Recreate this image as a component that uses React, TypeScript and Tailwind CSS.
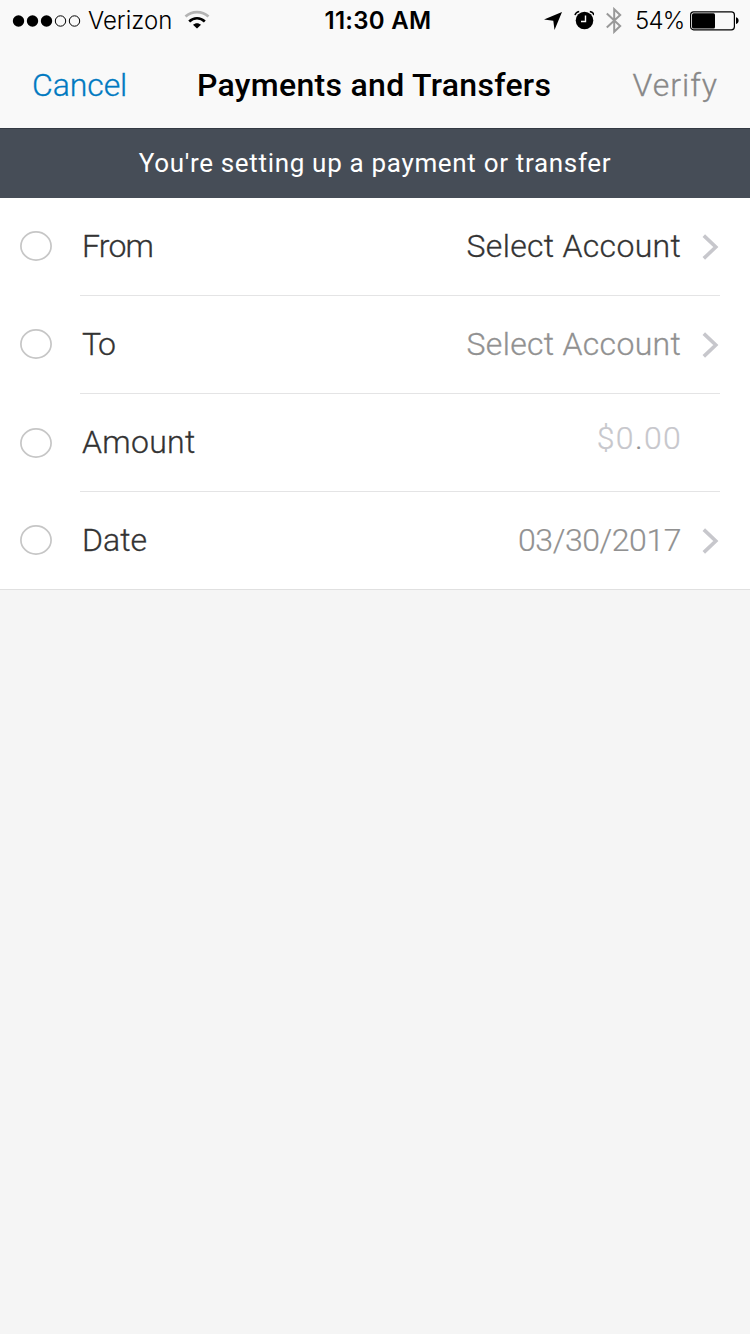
import type { ReactNode } from "react";

function StatusBar() {
  return (
    <div className="flex h-10 items-center pt-[2px] font-['Inter','Liberation_Sans',sans-serif] text-[24px] leading-[38px] text-black">
      <div className="flex w-[250px] shrink-0 items-center pl-[12px]">
        <svg className="-mt-px shrink-0" width="70" height="14" viewBox="0 0 70 14">
          <circle cx="6.5" cy="7" r="5.7" />
          <circle cx="20.5" cy="7" r="5.7" />
          <circle cx="34.5" cy="7" r="5.7" />
          <circle cx="48.5" cy="7" r="5.2" fill="none" stroke="#000" />
          <circle cx="62.5" cy="7" r="5.2" fill="none" stroke="#000" />
        </svg>
        <span className="ml-[6px] w-[96px] shrink-0">Verizon</span>
        <svg className="-mt-[2px] shrink-0" width="26" height="20" viewBox="0 0 26 20" fill="none" strokeWidth="2.7">
          <path d="M1.5 6.600C8 .5 18 .5 24.500 6.600" stroke="#b4b4b4" />
          <path d="M5.200 11.400c4.500-4.200 11.100-4.200 15.600 0" stroke="#000" />
          <path d="M13 18.500l-4-3.700c2.200-2.200 5.800-2.200 8 0z" fill="#000" />
        </svg>
      </div>
      <div className="w-[256px] shrink-0 text-center font-semibold tracking-[0.3px]">11:30 AM</div>
      <div className="flex flex-1 items-center pl-[38px]">
        <svg className="-mt-px shrink-0" width="18" height="18" viewBox="0 0 18 18">
          <path d="M18 0L10.500 18L9.300 8.700L0 7.500Z" />
        </svg>
        <svg className="-mt-[2px] ml-[12px] shrink-0" width="20" height="20" viewBox="0 0 20 20">
          <circle cx="10.500" cy="10.500" r="8.800" />
          <path d="M1 5.200C1.400 3.200 3 1.700 5.200 1.400M20 5.200C19.600 3.200 18 1.700 15.800 1.400" fill="none" stroke="#000" strokeWidth="1.500" />
          <path d="M11.500 5.500V11.500H7" fill="none" stroke="#f9f9f9" strokeWidth="1.400" />
        </svg>
        <svg className="-mt-[2px] ml-[12px] shrink-0" width="16" height="27" viewBox="0 0 16 27" fill="none" stroke="#999" strokeWidth="2">
          <path d="M.8 6.500L14.200 19L8.200 24.800V2.200L14.200 8L.8 20.500" />
        </svg>
        <span className="ml-[13px] w-[50px] shrink-0 whitespace-nowrap tracking-[-0.8px]">54%</span>
        <svg className="-mt-px ml-[5px] shrink-0" width="50" height="20" viewBox="0 0 50 20">
          <rect x=".6" y=".9" width="43.800" height="17.900" rx="3" fill="none" stroke="#000" strokeWidth="1.200" />
          <rect x="2" y="2.300" width="23" height="15.100" rx="1.500" />
          <path d="M46 6.300c3.500.8 3.500 6 0 6.800z" />
        </svg>
      </div>
    </div>
  );
}

function Chevron() {
  return (
    <svg className="ml-[20px] mt-px shrink-0" width="19" height="26" viewBox="0 0 19 26" fill="none" stroke="#c7c7cc" strokeWidth="3.600">
      <path d="M2.800 1.600L14.800 13L2.800 24.400" />
    </svg>
  );
}

function Row({ label, last, lowMarker, children }: { label: ReactNode; last?: boolean; lowMarker?: boolean; children: ReactNode }) {
  return (
    <div className={last ? "flex h-[98px] border-b border-[#e0e0e0] pl-[20px] pr-[30px]" : "flex h-[98px] pl-[20px] pr-[30px]"}>
      <div className={lowMarker ? "flex w-[60px] shrink-0 items-center" : "flex w-[60px] shrink-0 items-center pb-[2px]"}>
        <svg width="32" height="30" viewBox="0 0 32 30">
          <ellipse cx="16" cy="15" rx="15.100" ry="14.100" fill="none" stroke="#c6c6c6" strokeWidth="1.700" />
        </svg>
      </div>
      <div className={last ? "flex flex-1 items-center" : "flex flex-1 items-center border-b border-[#e4e4e5]"}>
        <span className="flex-1 pb-[2px] pl-[2px] text-[#333] [-webkit-text-stroke:0.3px]">{label}</span>
        {children}
      </div>
    </div>
  );
}

export default function App() {
  return (
    <main className="flex h-[1334px] w-[750px] flex-col overflow-hidden bg-[#f5f5f5] font-['Roboto','Liberation_Sans',sans-serif] text-[32px] font-light leading-[40px]">
      <header className="h-32 shrink-0 bg-[#f9f9f9]">
        <StatusBar />
        <nav className="flex h-[88px] items-center pt-px">
          <span className="w-[197px] shrink-0 pl-[32px] tracking-[-0.1px] text-[#0079c1] [-webkit-text-stroke:0.3px]">Cancel</span>
          <h1 className="flex-1 whitespace-nowrap font-medium tracking-[0.3px] text-black">Payments and Transfers</h1>
          <span className="shrink-0 pr-[32px] tracking-[1px] text-[#888] [-webkit-text-stroke:0.3px]">Verify</span>
        </nav>
      </header>
      <div className="flex h-[70px] shrink-0 items-center justify-center border-t border-[#343a44] bg-[#464d57] pb-[2px] text-[26px] font-normal tracking-[0.68px] text-white">
        You&apos;re setting up a payment or transfer
      </div>
      <section className="shrink-0 bg-white">
        <Row label={<span className="tracking-[-0.8px]">From</span>}>
          <span className="pb-[2px] tracking-[0.3px] text-[#333] [-webkit-text-stroke:0.3px]">Select Account</span>
          <Chevron />
        </Row>
        <Row label={<span className="tracking-[-1.5px]">To</span>}>
          <span className="pb-[2px] tracking-[0.3px] text-[#919191] [-webkit-text-stroke:0.3px]">Select Account</span>
          <Chevron />
        </Row>
        <Row label={<span className="tracking-[0.3px]">Amount</span>} lowMarker>
          <span className="mr-[38px] pb-[10px] tracking-[1.3px] text-[#c7c7cc] [-webkit-text-stroke:0.2px]">
            $0<span className="text-[#919191]">.</span>00
          </span>
        </Row>
        <Row label={<span>Date</span>} last>
          <span className="pb-[2px] tracking-[-0.45px] text-[#919191] [-webkit-text-stroke:0.2px]">03/30/2017</span>
          <Chevron />
        </Row>
      </section>
    </main>
  );
}
